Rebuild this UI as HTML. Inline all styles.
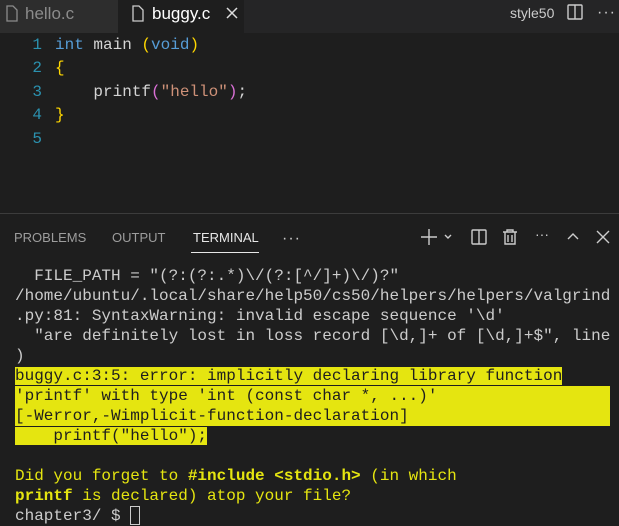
<!DOCTYPE html>
<html><head><meta charset="utf-8"><style>
*{margin:0;padding:0;box-sizing:border-box}
body{width:619px;height:525px;background:#1e1e1e;overflow:hidden;font-family:"Liberation Sans",sans-serif;position:relative}
.tabs{position:absolute;top:0;left:0;width:619px;height:33px;background:#252526}
.tab{position:absolute;top:0;height:33px;font-size:17px;line-height:28px}
.mono{font-family:"Liberation Mono",monospace;font-size:16px}
.code{position:absolute;left:0;top:33px}
.cl{position:absolute;height:23px;line-height:23px;white-space:pre}
.ln{position:absolute;left:26px;width:16px;text-align:right;color:#2b91af}
.term{position:absolute;left:15px;top:266px;line-height:20px;white-space:pre;color:#cccccc}
.hl{background:#e5e510;color:#1e1e1e}
.y{color:#e5e510}
</style></head><body>
<div class="tabs">
 <div class="tab" style="left:0;width:118px;background:#2d2d2d;color:#8b8b8b">
  <svg style="position:absolute;left:6px;top:5px" width="12" height="17" viewBox="0 0 12 17"><path d="M1 1h6l4 4v11H1z" fill="none" stroke="#8b8b8b" stroke-width="1.3"/></svg>
  <span style="position:absolute;left:25px;top:0">hello.c</span></div>
 <div class="tab" style="left:118px;width:126px;background:#1e1e1e;color:#fff">
  <svg style="position:absolute;left:14px;top:5px" width="12" height="17" viewBox="0 0 12 17"><path d="M1 1h6l4 4v11H1z" fill="none" stroke="#ccc" stroke-width="1.3"/></svg>
  <span style="position:absolute;left:34px;top:0">buggy.c</span>
  <svg style="position:absolute;left:108px;top:7px" width="12" height="12" viewBox="0 0 12 12"><path d="M1 1l10 10M11 1L1 11" stroke="#ddd" stroke-width="1.5"/></svg></div>
 <span style="position:absolute;left:510px;top:5px;font-size:14px;color:#ccc">style50</span>
 <svg style="position:absolute;left:567px;top:4px" width="16" height="16" viewBox="0 0 16 16"><rect x="1" y="1" width="14" height="14" rx="1" fill="none" stroke="#ccc" stroke-width="1.4"/><path d="M8 1v14" stroke="#ccc" stroke-width="1.4"/></svg>
 <span style="position:absolute;left:597px;top:4px;font-size:16px;color:#ccc;letter-spacing:1px">···</span>
</div>
<div class="code mono">
 <div class="cl" style="top:1px;left:0;width:300px"><span class="ln">1</span><span style="position:absolute;left:55px"><span style="color:#569cd6">int</span><span style="color:#d4d4d4"> main </span><span style="color:#ffd700">(</span><span style="color:#569cd6">void</span><span style="color:#ffd700">)</span></span></div>
 <div class="cl" style="top:24px;width:300px"><span class="ln">2</span><span style="position:absolute;left:55px;color:#ffd700">{</span></div>
 <div class="cl" style="top:48px;width:300px"><span class="ln">3</span><span style="position:absolute;left:55px;color:#d4d4d4">    printf<span style="color:#da70d6">(</span><span style="color:#ce9178">"hello"</span><span style="color:#da70d6">)</span>;</span></div>
 <div class="cl" style="top:71px;width:300px"><span class="ln">4</span><span style="position:absolute;left:55px;color:#ffd700">}</span></div>
 <div class="cl" style="top:95px;width:300px"><span class="ln">5</span></div>
</div>
<div style="position:absolute;left:0;top:213px;width:619px;height:1px;background:#3c3c3c"></div>
<div style="position:absolute;top:230px;left:14px;font-size:13px;color:#9d9d9d">PROBLEMS</div>
<div style="position:absolute;top:230px;left:112px;font-size:13px;color:#9d9d9d">OUTPUT</div>
<div style="position:absolute;top:230px;left:193px;font-size:13px;color:#e7e7e7">TERMINAL</div>
<div style="position:absolute;top:252px;left:191px;width:68px;height:1px;background:#e7e7e7"></div>
<div style="position:absolute;top:230px;left:282px;font-size:16px;color:#ccc;letter-spacing:1px">···</div>
<svg style="position:absolute;left:420px;top:229px" width="190" height="16" viewBox="0 0 190 16">
 <g stroke="#ccc" stroke-width="1.4" fill="none">
 <path d="M1 8h16M9 0v16"/><path d="M25 6l3 3 3-3"/>
 <rect x="52" y="1" width="14" height="14" rx="1"/><path d="M59 1v14"/>
 <path d="M83 3h14M87 3V1h6v2M85 3v12h10V3M88 6v7M92 6v7"/>
 <path d="M148 10l5-5 5 5"/><path d="M177 2l12 12M189 2l-12 12"/></g>
 <text x="115" y="10" fill="#ccc" font-size="14" font-family="Liberation Sans">···</text>
</svg>
<div class="term mono">  FILE_PATH = "(?:(?:.*)\/(?:[^/]+)\/)?"
/home/ubuntu/.local/share/help50/cs50/helpers/helpers/valgrind
.py:81: SyntaxWarning: invalid escape sequence '\d'
  "are definitely lost in loss record [\d,]+ of [\d,]+$", line
)
<span class="hl">buggy.c:3:5: error: implicitly declaring library function</span>
<span class="hl" style="display:inline-block;width:595px">'printf' with type 'int (const char *, ...)'</span>
<span class="hl" style="display:inline-block;width:595px">[-Werror,-Wimplicit-function-declaration]</span>
<span class="hl">    printf("hello");</span>

<span class="y">Did you forget to <b>#include &lt;stdio.h&gt;</b> (in which</span>
<span class="y"><b>printf</b> is declared) atop your file?</span>
chapter3/ $ <span style="display:inline-block;width:10px;height:19px;border:1px solid #ccc;vertical-align:-5px"></span></div>
</body></html>
